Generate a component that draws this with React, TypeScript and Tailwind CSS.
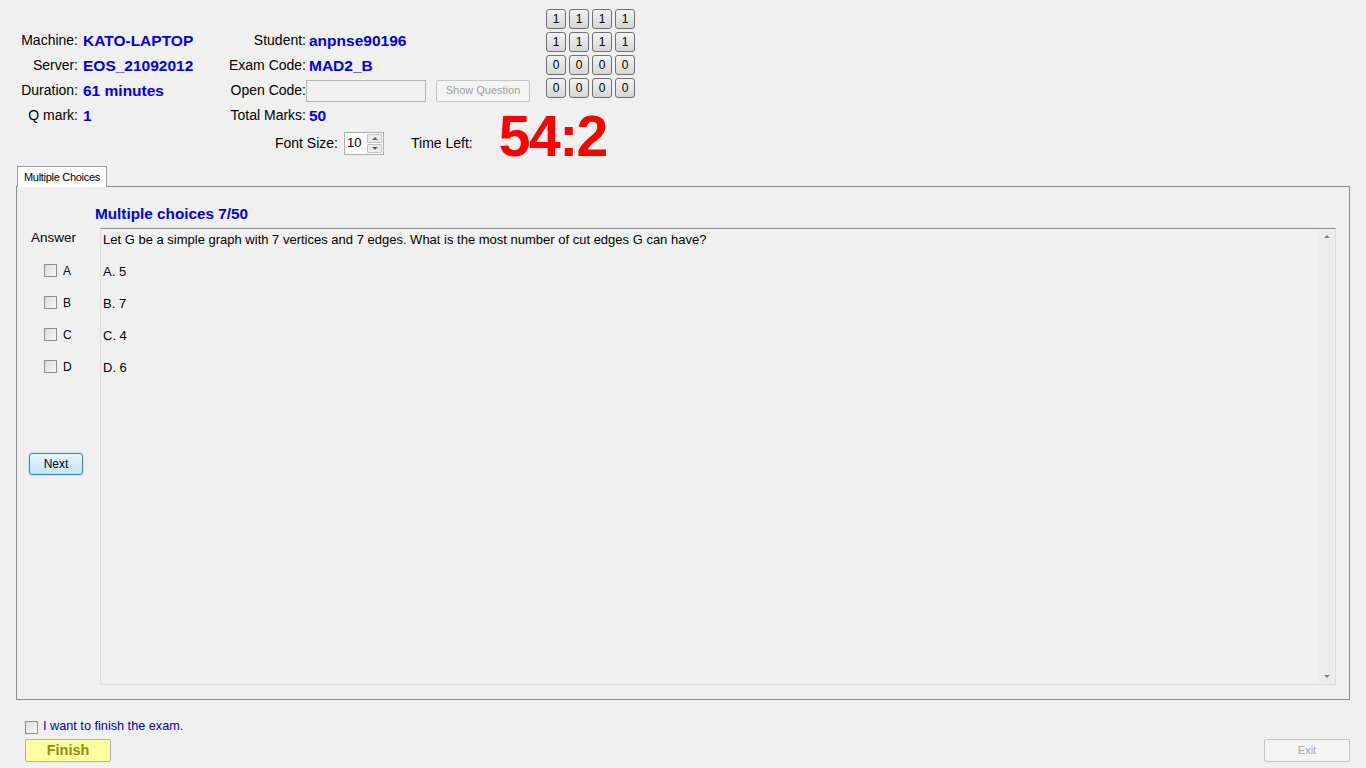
import React from 'react';

const grid = [
  ['1', '1', '1', '1'],
  ['1', '1', '1', '1'],
  ['0', '0', '0', '0'],
  ['0', '0', '0', '0'],
];

const Box: React.FC<{ className?: string }> = ({ className = '' }) => (
  <span
    className={`inline-block w-[13px] h-[13px] border border-[#8e8f8f] bg-gradient-to-br from-[#dcdcdc] to-[#f8f8f8] ${className}`}
  />
);

export default function App() {
  const left = [
    ['Machine:', 'KATO-LAPTOP', 'Student:', 'anpnse90196'],
    ['Server:', 'EOS_21092012', 'Exam Code:', 'MAD2_B'],
    ['Duration:', '61 minutes', 'Open Code:', ''],
    ['Q mark:', '1', 'Total Marks:', '50'],
  ];

  return (
    <div className="w-[1366px] h-[768px] bg-[#f0f0f0] overflow-hidden text-[14px] text-black font-['Liberation_Sans',Arial,sans-serif]">
      {/* header */}
      <div className="flex">
        <div className="pt-[28px] w-[546px]">
          {left.map((r, i) => (
            <div key={i} className="flex h-[25px] items-center">
              <div className="w-[78px] text-right">{r[0]}</div>
              <div className="w-[148px] pl-[5px] text-[15.5px] font-bold text-[#0000ee]">{r[1]}</div>
              <div className="w-[80px] text-right">{r[2]}</div>
              {i === 2 ? (
                <div className="flex items-center">
                  <div className="w-[120px] h-[22px] border border-[#b4b4b4] bg-[#f0f0f0]" />
                  <button className="ml-[10px] w-[94px] h-[22px] border border-[#c6c6c6] rounded-[2px] bg-[#f4f4f4] text-[11px] text-[#a0a0a0]">
                    Show Question
                  </button>
                </div>
              ) : (
                <div className="pl-[3px] text-[15.5px] font-bold text-[#0000ee]">{r[3]}</div>
              )}
            </div>
          ))}
        </div>
        <div className="pt-[9px] flex flex-col gap-[3px]">
          {grid.map((row, i) => (
            <div key={i} className="flex gap-[3px]">
              {row.map((c, j) => (
                <div
                  key={j}
                  className="w-[20px] h-[20px] rounded-[3px] border border-[#707070] bg-gradient-to-b from-[#f3f3f3] to-[#d6d6d6] flex items-center justify-center text-[12px]"
                >
                  {c}
                </div>
              ))}
            </div>
          ))}
        </div>
      </div>
      <div className="flex items-center h-[30px]">
        <div className="w-[338px] text-right">Font Size:</div>
        <div className="ml-[6px] w-[40px] h-[23px] border border-[#abadb3] bg-white flex items-center">
          <span className="pl-[2px] flex-1 text-[13px]">10</span>
          <div className="w-[15px] h-[19px] mr-[1px] flex flex-col gap-[1px]">
            <div className="flex-1 border border-[#c4c4c4] rounded-[1px] bg-[#ececec] flex items-center justify-center">
              <span className="block w-0 h-0 border-l-[3px] border-r-[3px] border-b-[3px] border-l-transparent border-r-transparent border-b-[#606060]" />
            </div>
            <div className="flex-1 border border-[#c4c4c4] rounded-[1px] bg-[#ececec] flex items-center justify-center">
              <span className="block w-0 h-0 border-l-[3px] border-r-[3px] border-t-[3px] border-l-transparent border-r-transparent border-t-[#606060]" />
            </div>
          </div>
        </div>
        <div className="ml-[27px]">Time Left:</div>
        <div className="ml-[26px] -mt-[14px] text-[57px] leading-none font-bold text-[#ff0000] tracking-[-1.5px]">54:2</div>
      </div>

      {/* tab */}
      <div className="ml-[16px] mr-[16px] mt-[8px]">
        <div className="flex">
          <div className="ml-[1px] h-[21px] px-[6px] border border-b-0 border-[#a0a0a0] bg-white flex items-center text-[11px] tracking-[-0.3px]">
            Multiple Choices
          </div>
        </div>
        <div className="h-[514px] border border-[#8c8c8c] -mt-[1px] flex">
          <div className="w-[83px] flex flex-col items-start">
            <div className="mt-[41px] ml-[14px] text-[13.5px]">Answer</div>
            <div className="mt-[16px] ml-[27px] flex flex-col gap-[19px]">
              {['A', 'B', 'C', 'D'].map((l) => (
                <div key={l} className="flex items-center gap-[6px] h-[13px] text-[12px]">
                  <Box />
                  <span>{l}</span>
                </div>
              ))}
            </div>
            <button className="mt-[80px] ml-[12px] w-[54px] h-[22px] rounded-[3px] border border-[#3c7fb1] bg-gradient-to-b from-[#eaf6fd] to-[#bee6fd] text-[12px] shadow-[0_0_2px_#7fd0f5]">
              Next
            </button>
          </div>
          <div className="flex-1 flex flex-col pr-[13px]">
            <div className="mt-[16px] -ml-[5px] text-[15.3px] font-bold text-[#0000ee] h-[25px]">Multiple choices 7/50</div>
            <div className="h-[457px] border-t border-t-[#8e8e8e] border-l border-b border-r border-[#dcdcdc] shadow-[0_-1px_0_#dceaf6] flex">
              <div className="flex-1 pl-[2px] pt-[3px] text-[13px] leading-[15px] flex flex-col gap-[17px]">
                <div>Let G be a simple graph with 7 vertices and 7 edges. What is the most number of cut edges G can have?</div>
                <div>A. 5</div>
                <div>B. 7</div>
                <div>C. 4</div>
                <div>D. 6</div>
              </div>
              <div className="w-[15px] mr-[1px] bg-[#ececec] flex flex-col justify-between items-center py-[6px]">
                <span className="block w-0 h-0 border-l-[3px] border-r-[3px] border-b-[3px] border-l-transparent border-r-transparent border-b-[#808080]" />
                <span className="block w-0 h-0 border-l-[3px] border-r-[3px] border-t-[3px] border-l-transparent border-r-transparent border-t-[#808080]" />
              </div>
            </div>
          </div>
        </div>
      </div>

      {/* footer */}
      <div className="ml-[25px] mt-[20px] flex items-center gap-[5px] h-[14px]">
        <Box />
        <span className="text-[12.7px] text-[#0000cc]">I want to finish the exam.</span>
      </div>
      <div className="mt-[5px] flex justify-between pl-[25px] pr-[16px]">
        <button className="w-[86px] h-[23px] border border-[#b0b0b0] rounded-[2px] bg-[#ffffa0] text-[14.5px] font-bold text-[#8e8e10]">
          Finish
        </button>
        <button className="w-[86px] h-[23px] border border-[#c6c6c6] rounded-[2px] bg-[#f4f4f4] text-[11px] text-[#a8a8a8]">
          Exit
        </button>
      </div>
    </div>
  );
}
